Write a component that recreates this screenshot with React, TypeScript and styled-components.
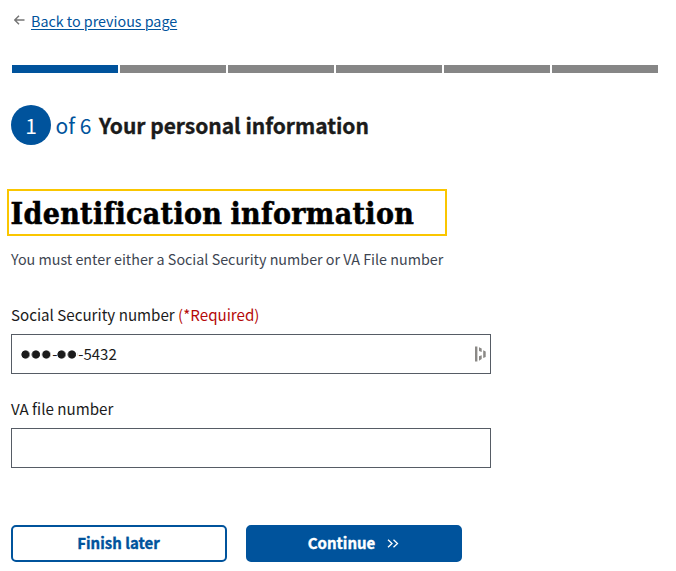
import React from "react";
import styled, { createGlobalStyle } from "styled-components";

const Global = createGlobalStyle`
  *, *::before, *::after { box-sizing: border-box; }
  body {
    margin: 0;
    background: #fff;
    color: #1b1b1b;
    font-family: "Noto Sans CJK SC", "Noto Sans", sans-serif;
  }
`;

const Page = styled.main`
  width: 676px;
  height: 571px;
  padding: 9px 18px 0 11px;
  overflow: hidden;
`;

const BackNav = styled.nav`
  display: flex;
  align-items: center;
  height: 24px;
  padding-left: 3px;
  svg { display: block; margin: -3px 6px 0 0; }
`;

const BackLink = styled.a`
  color: #00539c;
  font-size: 14.3px;
  line-height: 24px;
  text-decoration: underline;
  text-decoration-thickness: 1px;
  text-underline-offset: 2px;
`;

const Progress = styled.div`
  display: grid;
  grid-template-columns: repeat(6, 106px);
  gap: 2px;
  margin: 32px 0 0 1px;
`;

const Segment = styled.div<{ $done?: boolean }>`
  height: 8px;
  background: ${(p) => (p.$done ? "#00539c" : "#868686")};
`;

const StepHeading = styled.h2`
  display: flex;
  align-items: center;
  height: 40px;
  margin: 32px 0 0;
  font-size: 21px;
  font-weight: 700;
  line-height: 40px;
`;

const StepNumber = styled.span`
  width: 40px;
  height: 40px;
  border-radius: 50%;
  background: #00539c;
  color: #fff;
  font-weight: 400;
  text-align: center;
`;

const StepTotal = styled.span`
  margin: 0 7.5px 0 4.5px;
  color: #00539c;
  font-weight: 400;
`;

const StepName = styled.span`
  letter-spacing: -0.03px;
  -webkit-text-stroke: 0.35px currentColor;
`;

const Title = styled.h1`
  width: 440px;
  height: 47px;
  margin: 44px 0 0 -4px;
  padding: 1px 0 0 1.5px;
  border: 2px solid #fac600;
  color: #000;
  font-family: "DejaVu Serif Condensed", "DejaVu Serif", serif;
  font-stretch: condensed;
  font-size: 30px;
  font-weight: 700;
  line-height: 44px;
  letter-spacing: 0.33px;
  word-spacing: -1.5px;
  white-space: nowrap;
  -webkit-text-stroke: 0.5px currentColor;
`;

const Hint = styled.p`
  margin: 11px 0 0;
  color: #3d4551;
  font-size: 14.32px;
  line-height: 24px;
`;

const Field = styled.div<{ $gap: number }>`
  width: 480px;
  margin-top: ${(p) => p.$gap}px;
`;

const Label = styled.label`
  display: block;
  height: 24px;
  font-size: 15.15px;
  line-height: 22px;
`;

const Required = styled.span`
  color: #b50909;
`;

const InputBox = styled.div`
  display: flex;
  align-items: center;
  justify-content: space-between;
  height: 40px;
  margin-top: 7px;
  padding: 0 4px 0 9px;
  border: 1px solid #565c65;
  font-size: 15px;
  line-height: 38px;
`;

const Masked = styled.span`
  display: flex;
  align-items: center;
`;

const Dots = styled.span<{ $count: number }>`
  width: ${(p) => p.$count * 10.4}px;
  height: 9px;
  background: radial-gradient(circle at 4.5px 4.5px, #1b1b1b 3.7px, transparent 4.5px) 0 0 / 10.4px 9px repeat-x;
`;

const Actions = styled.div`
  display: grid;
  grid-template-columns: 216px 216px;
  gap: 19px;
  margin-top: 57px;
`;

const Button = styled.button<{ $primary?: boolean }>`
  display: flex;
  align-items: center;
  justify-content: center;
  height: 37px;
  padding: 0 1px 2px 0;
  border: 2px solid #00539c;
  border-radius: 5px;
  background: ${(p) => (p.$primary ? "#00539c" : "#fff")};
  color: ${(p) => (p.$primary ? "#fff" : "#00539c")};
  font: 700 15px/31px "Noto Sans CJK SC", "Noto Sans", sans-serif;
  -webkit-text-stroke: 0.35px currentColor;
  svg { display: block; margin: 1px 0 0 12px; }
`;

export default function App() {
  return (
    <>
      <Global />
      <Page>
        <BackNav>
          <svg width="11" height="10" viewBox="0 0 11 10" fill="none" stroke="#757575" strokeWidth="1.4">
            <path d="M10.5 5H1M5 .7.8 5 5 9.3" />
          </svg>
          <BackLink href="#">Back to previous page</BackLink>
        </BackNav>
        <Progress>
          {[1, 2, 3, 4, 5, 6].map((n) => (
            <Segment key={n} $done={n === 1} />
          ))}
        </Progress>
        <StepHeading>
          <StepNumber>1</StepNumber>
          <StepTotal>of 6</StepTotal>
          <StepName>Your personal information</StepName>
        </StepHeading>
        <Title>Identification information</Title>
        <Hint>You must enter either a Social Security number or VA File number</Hint>
        <Field $gap={32}>
          <Label>
            Social Security number <Required>(*Required)</Required>
          </Label>
          <InputBox>
            <Masked>
              <Dots $count={3} />-<Dots $count={2} />-5432
            </Masked>
            <svg width="11" height="16" viewBox="0 0 11 16" fill="#8b8986">
              <path d="M0 .5h2.4v15H0zM4 1.2l2.7 1.3V6L4 5zM4 10.3l2.7-1v3.8L4 14.8zM8.2 4.3l2.5 1.2v5.4l-2.5 1.2z" />
            </svg>
          </InputBox>
        </Field>
        <Field $gap={23}>
          <Label>VA file number</Label>
          <InputBox />
        </Field>
        <Actions>
          <Button>Finish later</Button>
          <Button $primary>
            Continue
            <svg width="12" height="9" viewBox="0 0 12 9" fill="none" stroke="#fff" strokeWidth="1.3">
              <path d="m1 .7 4 3.8-4 3.8M6.5.7l4 3.8-4 3.8" />
            </svg>
          </Button>
        </Actions>
      </Page>
    </>
  );
}
